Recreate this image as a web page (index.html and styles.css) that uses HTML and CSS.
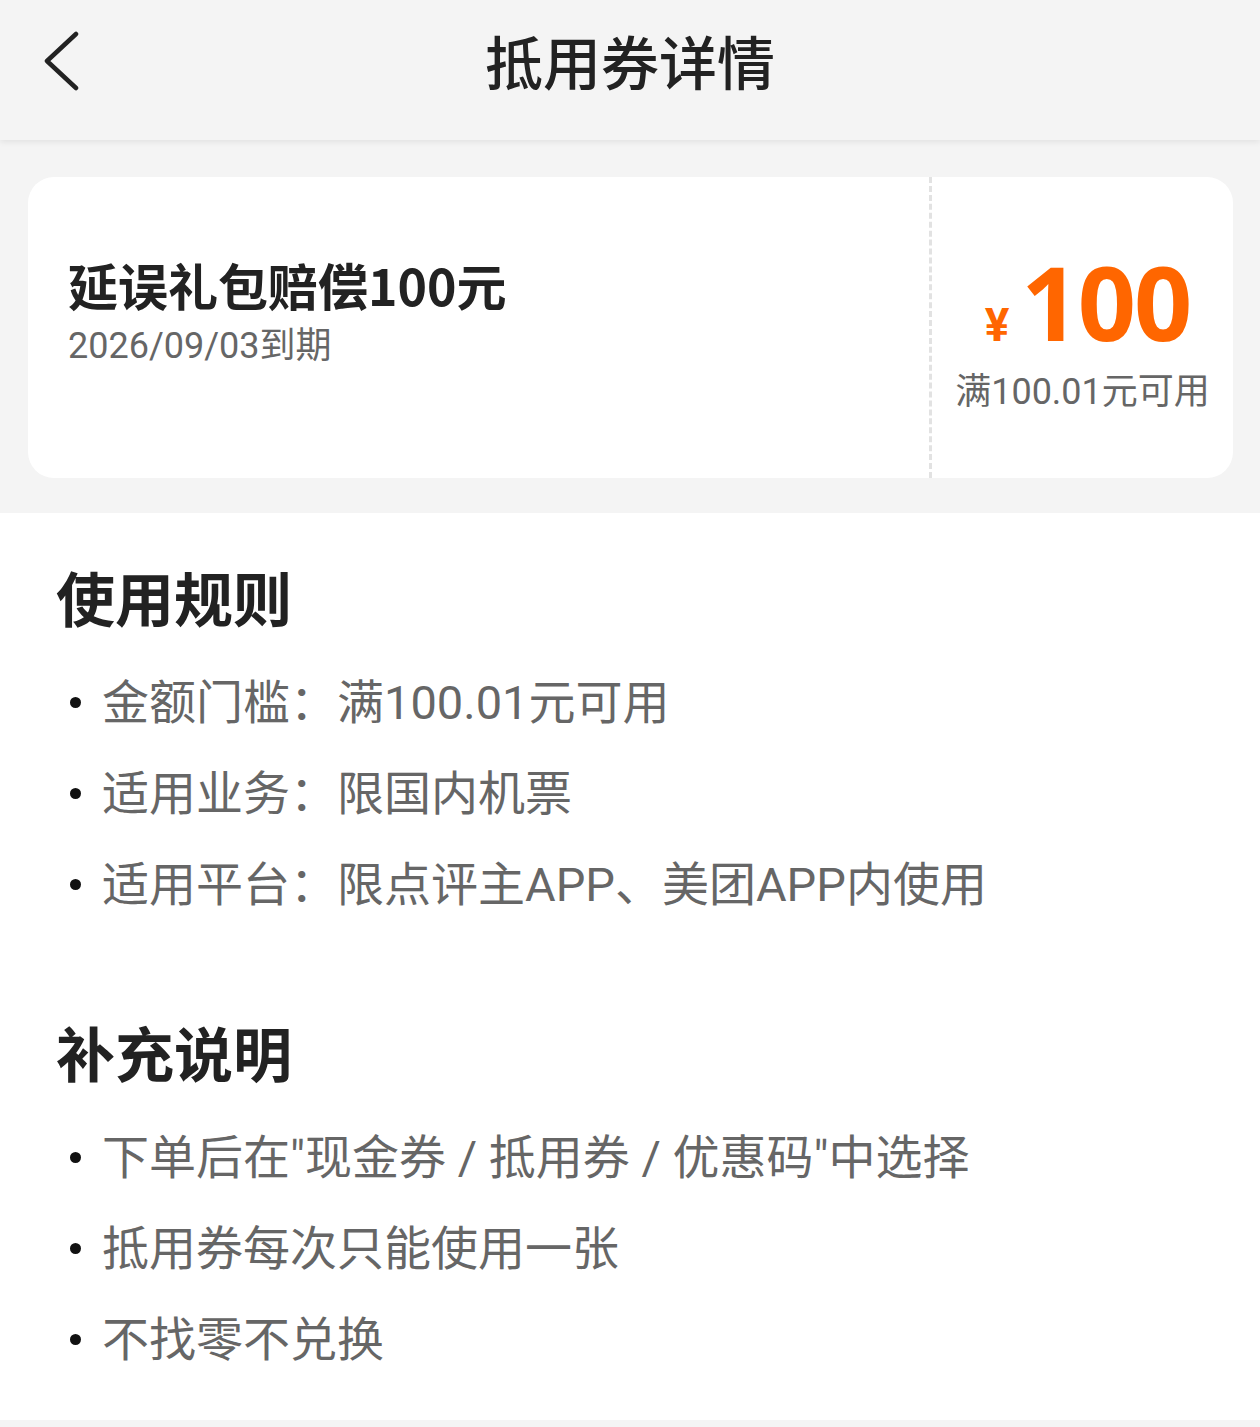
FILE: index.html
```html
<!DOCTYPE html>
<html lang="zh-CN">
<head>
	<meta charset="UTF-8">
	<meta name="viewport" content="width=device-width, initial-scale=1.0">
	<title>抵用券详情</title>

	<link rel="stylesheet" href="styles.css">
</head>
<body>

	<header class="topbar">
		<a class="topbar__back" href="#">
			<svg width="40" height="62" viewBox="0 0 40 62">
				<polyline points="32,4 3,31 32,58" fill="none" stroke="#222" stroke-width="4.5" stroke-linecap="round" stroke-linejoin="round"/>
			</svg>
		</a>
		<h1 class="topbar__title">抵用券详情</h1>
		<div></div>
	</header>

	<section class="coupon">
		<div class="coupon__card">
			<div class="coupon__card__info">
				<div class="coupon__card__name">延误礼包赔偿100元</div>
				<div class="coupon__card__date">2026/09/03到期</div>
			</div>
			<div class="coupon__card__value">
				<div class="coupon__card__amount"><span class="coupon__card__yen">¥</span>100</div>
				<div class="coupon__card__limit">满100.01元可用</div>
			</div>
		</div>
	</section>

	<content class="rules">
		<div class="rules__block">
			<h2 class="rules__title">使用规则</h2>
			<ul class="rules__list">
				<li>金额门槛：满100.01元可用</li>
				<li>适用业务：限国内机票</li>
				<li>适用平台：限点评主APP、美团APP内使用</li>
			</ul>
		</div>

		<div class="rules__block">
			<h2 class="rules__title">补充说明</h2>
			<ul class="rules__list">
				<li>下单后在"现金券 / 抵用券 / 优惠码"中选择</li>
				<li>抵用券每次只能使用一张</li>
				<li>不找零不兑换</li>
			</ul>
		</div>
	</content>

</body>
</html>
```

FILE: styles.css
```css
* {
	margin: 0;
	padding: 0;
	box-sizing: border-box;
	font-family: "Roboto", "Noto Sans CJK SC", sans-serif;
}

body {
	background: #f4f4f4;
	width: 1260px;
	min-height: 1427px;
}

/* barra superior */
.topbar {
	height: 140px;
	padding-bottom: 20px;
	display: grid;
	grid-template-columns: 140px 1fr 140px;
	align-items: center;
	background: #f4f4f4;
	box-shadow: 0 2px 6px rgba(0, 0, 0, 0.08);
	position: relative;
	z-index: 1;
}

.topbar__back {
	display: flex;
	padding-left: 44px;
	padding-top: 2px;
}

.topbar__title {
	font-family: "Noto Sans CJK SC", sans-serif;
	text-align: center;
	font-size: 58px;
	font-weight: 500;
	color: #222;
	line-height: 1;
}

/* tarjeta del cupon */
.coupon {
	padding: 37px 27px 35px 28px;
}

.coupon__card {
	height: 301px;
	background: #fff;
	border-radius: 26px;
	display: flex;
}

.coupon__card__info {
	flex: 1;
	padding: 75px 0 0 40px;
	border-right: 3px dashed #e2e2e2;
}

.coupon__card__name {
	font-family: "Noto Sans CJK SC", sans-serif;
	font-size: 50px;
	font-weight: 700;
	color: #222;
	line-height: 64px;
}

.coupon__card__date {
	font-size: 36px;
	color: #666;
	line-height: 48px;
	margin-top: 6px;
}

.coupon__card__value {
	width: 301px;
	display: flex;
	flex-direction: column;
	align-items: center;
	padding-top: 70px;
}

.coupon__card__amount {
	font-family: "Noto Sans", sans-serif;
	font-size: 102px;
	font-weight: 700;
	color: #ff6600;
	line-height: 110px;
	letter-spacing: -2px;
	padding-left: 10px;
}

.coupon__card__yen {
	font-size: 46px;
	margin-right: 14px;
}

.coupon__card__limit {
	font-size: 36px;
	color: #666;
	line-height: 48px;
	margin-top: -12px;
}

/* reglas de uso */
.rules {
	display: block;
	background: #fff;
	padding: 46px 0 35px 56px;
	margin-bottom: 7px;
}

.rules__block + .rules__block {
	margin-top: 84px;
}

.rules__title {
	font-family: "Noto Sans CJK SC", sans-serif;
	font-size: 59px;
	font-weight: 700;
	color: #222;
	line-height: 76px;
	margin-bottom: 22px;
}

.rules__list {
	list-style: none;
}

.rules__list li {
	position: relative;
	font-size: 47px;
	color: #666;
	line-height: 91px;
	padding-left: 46px;
}

.rules__list li::before {
	content: "";
	position: absolute;
	left: 14px;
	top: 40px;
	width: 11px;
	height: 11px;
	border-radius: 50%;
	background: #111;
}
```
